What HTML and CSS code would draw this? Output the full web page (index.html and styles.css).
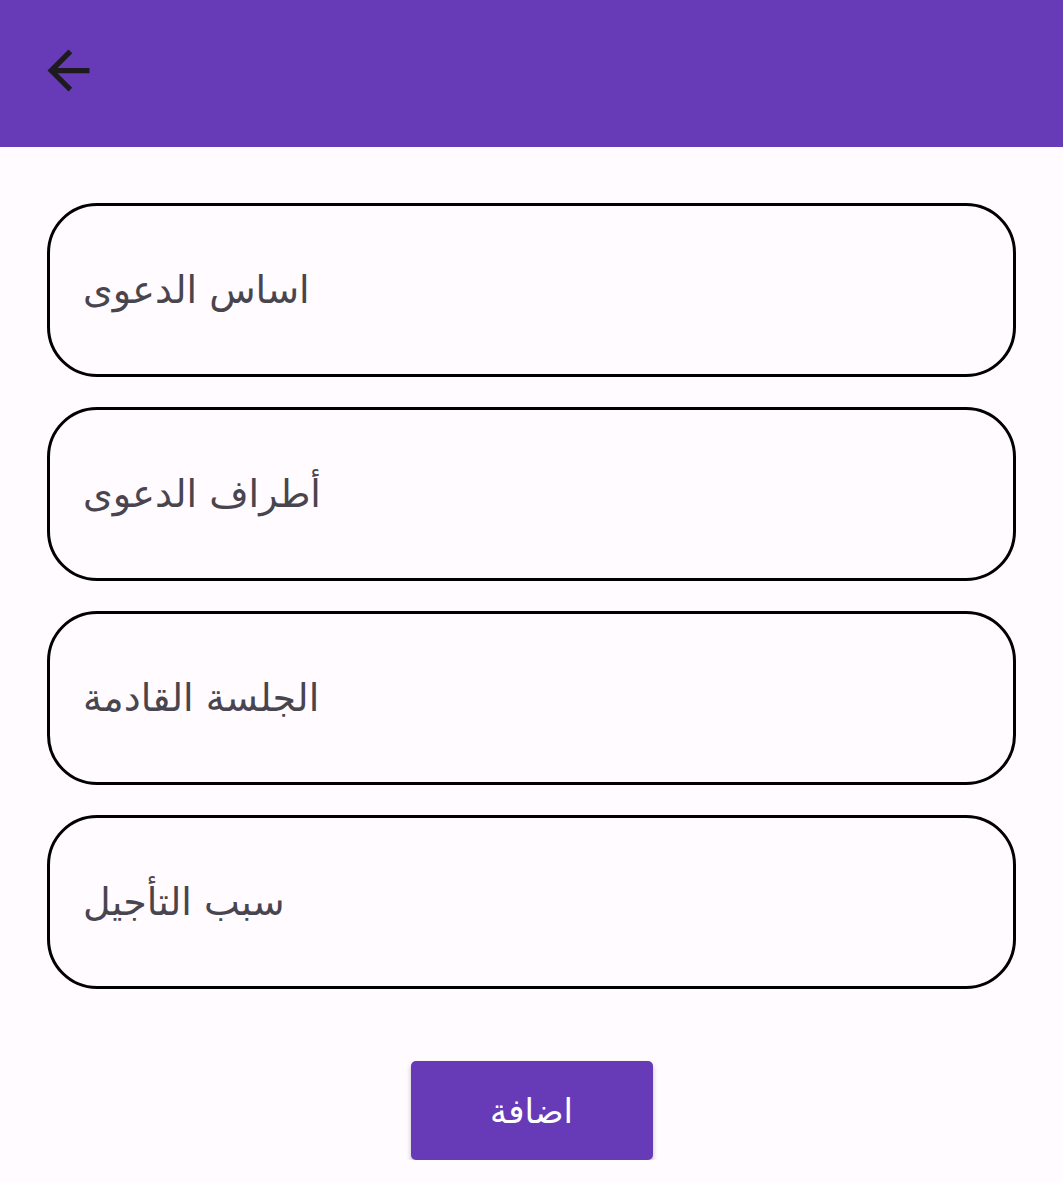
FILE: index.html
```html
<!DOCTYPE html>
<html lang="ar">
<head>
<meta charset="utf-8">
<link rel="stylesheet" href="styles.css">
</head>
<body>
<header class="appbar">
  <button class="back" aria-label="back">
    <svg viewBox="0 0 24 24" width="63" height="63"><path d="M20 11H7.83l5.59-5.59L12 4l-8 8 8 8 1.41-1.41L7.83 13H20v-2z" fill="#1d1b20"/></svg>
  </button>
</header>
<main class="form">
  <div class="field"><span class="ph" dir="rtl">اساس الدعوى</span></div>
  <div class="field"><span class="ph" dir="rtl">أطراف الدعوى</span></div>
  <div class="field"><span class="ph" dir="rtl">الجلسة القادمة</span></div>
  <div class="field"><span class="ph" dir="rtl">سبب التأجيل</span></div>
  <button class="submit" dir="rtl">اضافة</button>
</main>
</body>
</html>
```
FILE: styles.css
```css
html, body {
  margin: 0;
  padding: 0;
  background: #fffbfe;
  font-family: "DejaVu Sans", "Noto Sans", sans-serif;
}
.appbar {
  height: 147px;
  background: #673ab7;
  display: flex;
  align-items: flex-start;
}
.back {
  margin: 39px 0 0 37px;
  padding: 0;
  border: 0;
  background: none;
  width: 63px;
  height: 63px;
  display: block;
}
.back svg { display: block; }
.form {
  display: flex;
  flex-direction: column;
  align-items: center;
  padding: 56px 47px 0 47px;
  gap: 30px;
}
.field {
  box-sizing: border-box;
  width: 100%;
  height: 174px;
  border: 3px solid #000;
  border-radius: 50px;
  display: flex;
  align-items: center;
  padding-left: 33px;
}
.ph {
  font-size: 38px;
  color: #49454f;
}
.submit {
  margin-top: 42px;
  width: 242px;
  height: 99px;
  border: 0;
  border-radius: 5px;
  background: #673ab7;
  color: #fff;
  font-family: "DejaVu Sans", "Noto Sans", sans-serif;
  font-size: 34px;
  box-shadow: 0 3px 5px rgba(0,0,0,0.25);
}
```
